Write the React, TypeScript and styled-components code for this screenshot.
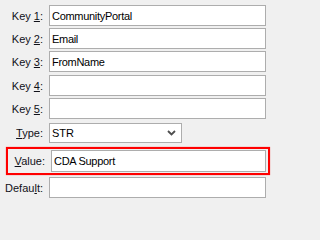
import React from 'react';
import styled, { createGlobalStyle } from 'styled-components';

type Field = {
  before: string;
  key: string;
  after: string;
  value: string;
  gap: number;
};

const fields: Field[] = [
  { before: 'Key ', key: '1', after: ':', value: 'CommunityPortal', gap: 0 },
  { before: 'Key ', key: '2', after: ':', value: 'Email', gap: 2 },
  { before: 'Key ', key: '3', after: ':', value: 'FromName', gap: 2 },
  { before: 'Key ', key: '4', after: ':', value: '', gap: 3 },
  { before: 'Key ', key: '5', after: ':', value: '', gap: 2 },
];

export default function App() {
  return (
    <>
      <GlobalStyle />
      <Form>
        {fields.map((f) => (
          <Row key={f.key} $gap={f.gap}>
            <Label>
              {f.before}
              <u>{f.key}</u>
              {f.after}
            </Label>
            <TextBox defaultValue={f.value} />
          </Row>
        ))}

        <Row $gap={4}>
          <Label>
            <u>T</u>ype:
          </Label>
          <SelectWrap>
            <Select defaultValue="STR">
              <option>STR</option>
              <option>NUM</option>
              <option>BOOL</option>
            </Select>
            <Chevron width="9" height="6" viewBox="0 0 9 6">
              <path d="M1 1 L4.5 4.5 L8 1" fill="none" stroke="#4e4e4e" strokeWidth="1.8" />
            </Chevron>
          </SelectWrap>
        </Row>

        <Highlight>
          <Label $inset>
            <u>V</u>alue:
          </Label>
          <TextBox $tall defaultValue="CDA Support" />
        </Highlight>

        <Row $gap={2}>
          <Label>
            Defau<u>l</u>t:
          </Label>
          <TextBox defaultValue="" />
        </Row>
      </Form>
    </>
  );
}

const GlobalStyle = createGlobalStyle`
  html, body {
    margin: 0;
    padding: 0;
    background: #f0f0f0;
  }
  body {
    font-family: "Liberation Sans", Arial, sans-serif;
    font-size: 11px;
    color: #000;
  }
`;

const Form = styled.div`
  display: flex;
  flex-direction: column;
  padding: 5px 5px 0 0;
  width: 271px;
  box-sizing: border-box;
`;

const Row = styled.div<{ $gap: number }>`
  display: grid;
  grid-template-columns: 49px 1fr;
  align-items: center;
  margin-top: ${({ $gap }) => $gap}px;
`;

const Label = styled.label<{ $inset?: boolean }>`
  text-align: right;
  padding-right: 6px;
  white-space: nowrap;
  font-size: 11px;
  color: #101018;

  u {
    text-underline-offset: 1px;
  }
`;

const TextBox = styled.input<{ $tall?: boolean }>`
  box-sizing: border-box;
  height: ${({ $tall }) => ($tall ? 22 : 21)}px;
  width: 100%;
  margin: 0;
  padding: 0 2px;
  border: 1px solid #adadad;
  background: #fff;
  font-family: "Liberation Sans", Arial, sans-serif;
  font-size: 11px;
  letter-spacing: -0.3px;
  color: #000;
  outline: none;
`;

const SelectWrap = styled.div`
  position: relative;
  width: 133px;
  height: 20px;
`;

const Select = styled.select`
  appearance: none;
  box-sizing: border-box;
  width: 100%;
  height: 100%;
  margin: 0;
  padding: 0 2px;
  border: 1px solid #adadad;
  border-radius: 0;
  background: #fff;
  font-family: "Liberation Sans", Arial, sans-serif;
  font-size: 11px;
  color: #000;
  outline: none;
`;

const Chevron = styled.svg`
  position: absolute;
  right: 6px;
  top: 7px;
  pointer-events: none;
`;

const Highlight = styled.div`
  display: grid;
  grid-template-columns: 41px 1fr;
  align-items: center;
  box-sizing: border-box;
  height: 28px;
  margin: 4px -4px 0 6px;
  padding: 0 2px;
  border: 2px solid #ff0000;
  box-shadow: 0 0 1px rgba(255, 0, 0, 0.6);
`;
